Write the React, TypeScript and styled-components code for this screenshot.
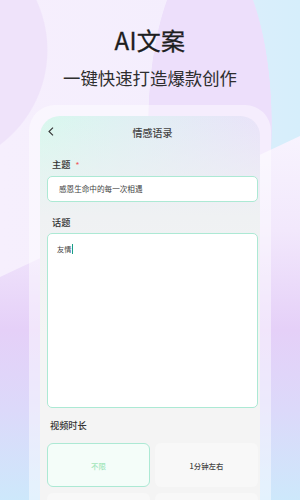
import styled, { createGlobalStyle } from "styled-components";

const GlobalStyle = createGlobalStyle`
  html, body {
    margin: 0;
    padding: 0;
  }
  body {
    font-family: "Noto Sans CJK SC", "Noto Sans", sans-serif;
  }
`;

const Page = styled.div`
  position: relative;
  width: 300px;
  height: 500px;
  overflow: hidden;
  display: flex;
  flex-direction: column;
  align-items: center;
  background:
    radial-gradient(circle 119px at -71px 50px, #efe3fa 99%, transparent 100%),
    radial-gradient(ellipse 62px 175px at 210px 125px, #eddffb 99%, transparent 100%),
    linear-gradient(90deg, #f6effd 0%, #f4eefd 62%, #d9eefb 86%, #d6eefb 100%);

  &::before {
    content: "";
    position: absolute;
    inset: 0;
    clip-path: polygon(0 277px, 300px 136px, 300px 100%, 0 100%);
    background: linear-gradient(
      180deg,
      #f8f4fe 130px,
      #f2e8fc 230px,
      #e5d0f8 330px,
      #dcd9fa 410px,
      #cde8fb 500px
    );
  }
`;

const Hero = styled.div`
  position: relative;
  z-index: 1;
  display: flex;
  flex-direction: column;
  align-items: center;
  padding-top: 25px;
`;

const Title = styled.h1`
  margin: 0;
  font-size: 24px;
  line-height: 30px;
  font-weight: 400;
  color: #1e1e1e;
  letter-spacing: 0.3px;
  -webkit-text-stroke: 0.3px #1e1e1e;
`;

const Subtitle = styled.p`
  margin: 12px 0 0;
  font-size: 17.4px;
  line-height: 22px;
  font-weight: 400;
  color: #2e2e2e;
`;

const Frame = styled.div`
  position: relative;
  z-index: 1;
  flex-shrink: 0;
  margin-top: 16px;
  width: 242px;
  box-sizing: border-box;
  padding: 11px 11px 0;
  border-radius: 26px 26px 0 0;
  background: rgba(255, 255, 255, 0.45);
`;

const Screen = styled.div`
  box-sizing: border-box;
  padding: 0 2px 40px 7px;
  border-radius: 20px 20px 0 0;
  background:
    linear-gradient(180deg, rgba(242, 242, 244, 0) 0px, #eff1f3 100px, #f4f4f4 220px),
    linear-gradient(90deg, #d8f8ee 0%, #e1eef4 50%, #e9e3f9 100%);
  display: flex;
  flex-direction: column;

  & > * {
    flex-shrink: 0;
  }
`;

const Header = styled.div`
  height: 32px;
  display: flex;
  align-items: center;
  justify-content: center;
  position: relative;
`;

const Back = styled.svg`
  position: absolute;
  left: 1px;
  top: 11px;
`;

const HeaderTitle = styled.span`
  font-size: 10px;
  font-weight: 500;
  color: #444;
`;

const Label = styled.div<{ $indent?: number; $top: number; $bottom: number }>`
  margin: ${(p) => p.$top}px 0 ${(p) => p.$bottom}px ${(p) => p.$indent ?? 5}px;
  height: 14px;
  line-height: 14px;
  font-size: 9.2px;
  font-weight: 500;
  color: #333;
`;

const Star = styled.span`
  color: #f05b5b;
  margin-left: 5px;
  font-size: 8px;
`;

const Field = styled.div<{ $height: number }>`
  height: ${(p) => p.$height}px;
  box-sizing: border-box;
  border: 1px solid #ace9d4;
  border-radius: 5px;
  background: #fff;
`;

const InputText = styled.div`
  padding-left: 11px;
  line-height: 24px;
  font-size: 7.6px;
  color: #444;
`;

const AreaText = styled.div`
  padding: 10px 0 0 9px;
  line-height: 9px;
  font-size: 7.2px;
  color: #444;
  display: flex;
  align-items: center;
`;

const Caret = styled.span`
  display: inline-block;
  width: 1px;
  height: 10px;
  margin-left: 1px;
  background: #1a9f86;
`;

const Options = styled.div`
  display: grid;
  grid-template-columns: 1fr 1fr;
  column-gap: 5px;
  row-gap: 6px;
`;

const Option = styled.div<{ $active?: boolean }>`
  height: 44px;
  box-sizing: border-box;
  border-radius: 6px;
  border: 1px solid ${(p) => (p.$active ? "#ace9d4" : "transparent")};
  background: ${(p) => (p.$active ? "#f4fdf9" : "#f8f8f8")};
  display: flex;
  align-items: center;
  justify-content: center;
  font-size: 7.4px;
  font-weight: 500;
  color: ${(p) => (p.$active ? "#a3e6bb" : "#444")};
`;

const durations = ["不限", "1分钟左右", "", ""];

export default function App() {
  return (
    <>
      <GlobalStyle />
      <Page>
        <Hero>
          <Title>AI文案</Title>
          <Subtitle>一键快速打造爆款创作</Subtitle>
        </Hero>
        <Frame>
          <Screen>
            <Header>
              <Back width="6" height="9" viewBox="0 0 6 9" fill="none">
                <path d="M5 0.6L1 4.5L5 8.4" stroke="#333" strokeWidth="1.1" />
              </Back>
              <HeaderTitle>情感语录</HeaderTitle>
            </Header>
            <Label $top={9} $bottom={5}>
              主题<Star>*</Star>
            </Label>
            <Field $height={26}>
              <InputText>感恩生命中的每一次相遇</InputText>
            </Field>
            <Label $top={13} $bottom={4}>
              话题
            </Label>
            <Field $height={175}>
              <AreaText>
                友情
                <Caret />
              </AreaText>
            </Field>
            <Label $indent={3} $top={10} $bottom={11}>
              视频时长
            </Label>
            <Options>
              {durations.map((d, i) => (
                <Option key={i} $active={i === 0}>
                  {d}
                </Option>
              ))}
            </Options>
          </Screen>
        </Frame>
      </Page>
    </>
  );
}
